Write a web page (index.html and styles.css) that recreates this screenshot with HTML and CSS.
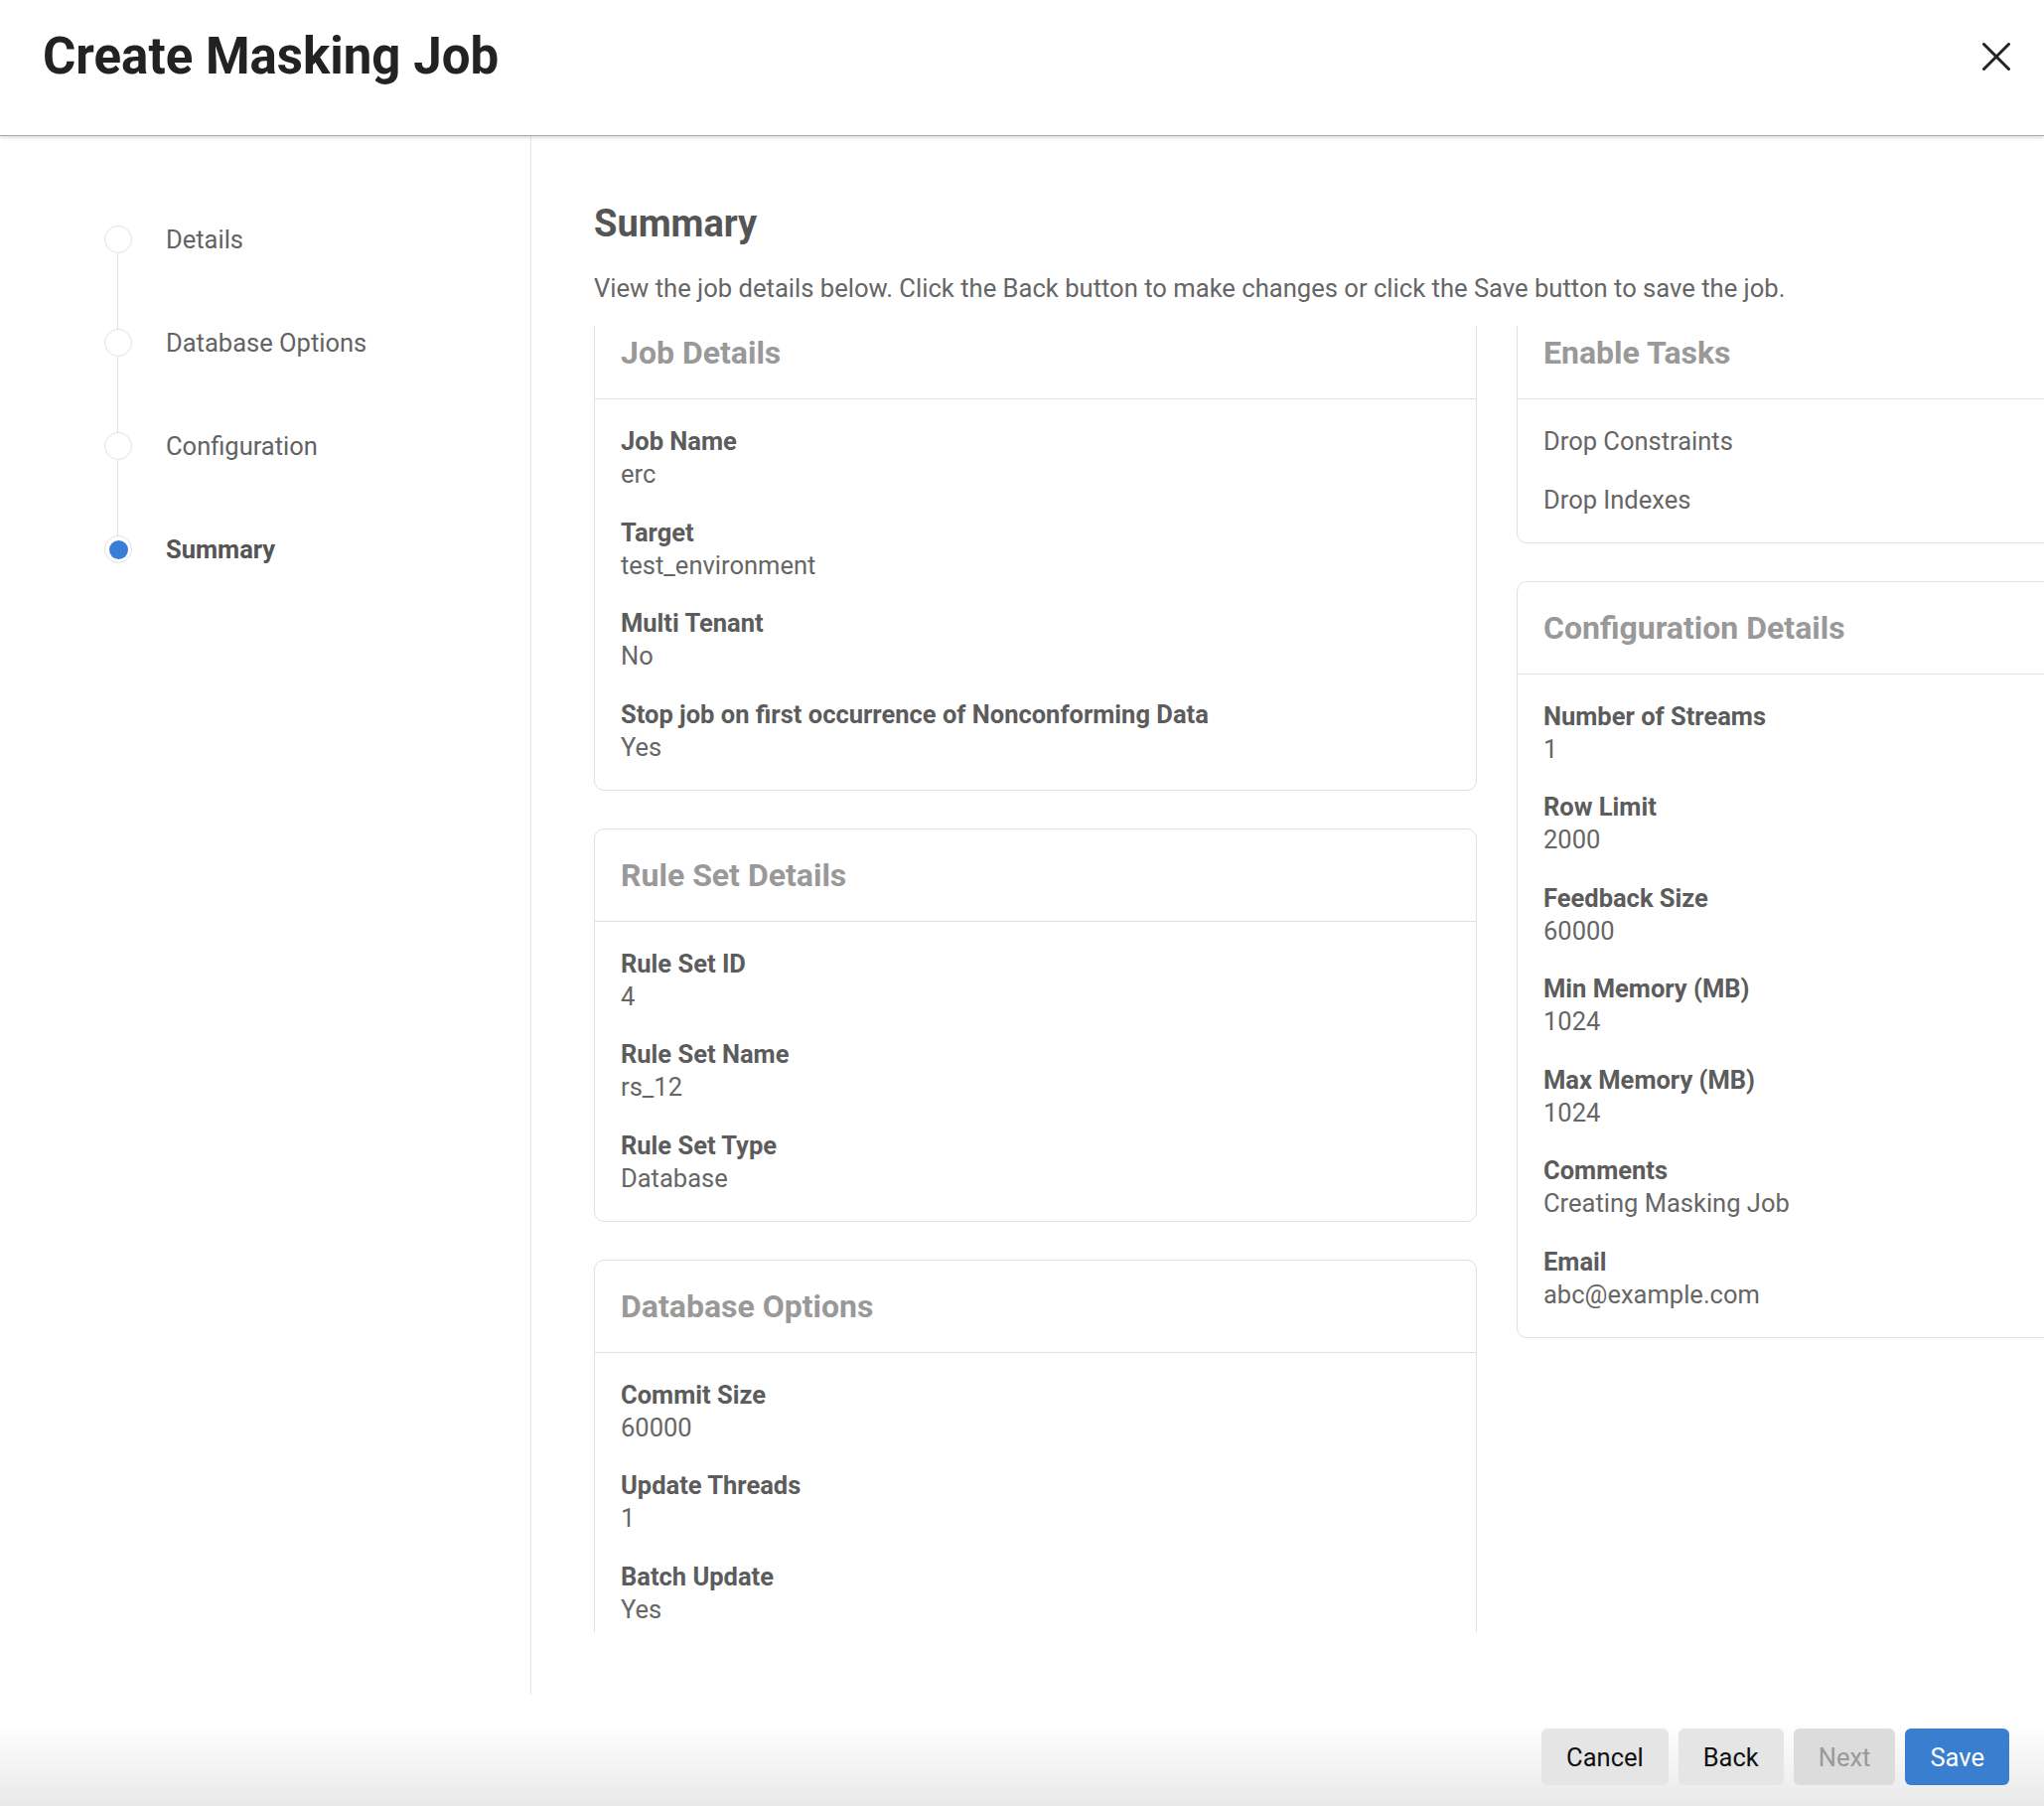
FILE: index.html
```html
<!DOCTYPE html>
<html lang="en">
<head>
  <meta charset="UTF-8">
  <title>Create Masking Job</title>
  <link rel="stylesheet" href="styles.css">
</head>
<body>
  <div class="dialog">
    <div class="dialog-header">
      <h1>Create Masking Job</h1>
      <button class="close-btn" aria-label="Close">
        <svg width="28" height="28" viewBox="0 0 28 28"><path d="M1.5 1.5 L26.5 26.5 M26.5 1.5 L1.5 26.5" stroke="#222" stroke-width="3" stroke-linecap="round" fill="none"/></svg>
      </button>
    </div>

    <div class="dialog-body">
      <!-- wizard steps -->
      <ul class="steps">
        <li class="step"><span class="dot"></span>Details</li>
        <li class="step"><span class="dot"></span>Database Options</li>
        <li class="step"><span class="dot"></span>Configuration</li>
        <li class="step active"><span class="dot"></span>Summary</li>
      </ul>

      <div class="content">
        <h2>Summary</h2>
        <p class="intro">View the job details below. Click the Back button to make changes or click the Save button to save the job.</p>

        <div class="scroll-area">
          <div class="columns">
            <div class="column">
              <div class="card">
                <div class="card-header">Job Details</div>
                <div class="card-body">
                  <div class="field"><div class="label">Job Name</div><div class="value">erc</div></div>
                  <div class="field"><div class="label">Target</div><div class="value">test_environment</div></div>
                  <div class="field"><div class="label">Multi Tenant</div><div class="value">No</div></div>
                  <div class="field"><div class="label">Stop job on first occurrence of Nonconforming Data</div><div class="value">Yes</div></div>
                </div>
              </div>

              <div class="card">
                <div class="card-header">Rule Set Details</div>
                <div class="card-body">
                  <div class="field"><div class="label">Rule Set ID</div><div class="value">4</div></div>
                  <div class="field"><div class="label">Rule Set Name</div><div class="value">rs_12</div></div>
                  <div class="field"><div class="label">Rule Set Type</div><div class="value">Database</div></div>
                </div>
              </div>

              <div class="card">
                <div class="card-header">Database Options</div>
                <div class="card-body">
                  <div class="field"><div class="label">Commit Size</div><div class="value">60000</div></div>
                  <div class="field"><div class="label">Update Threads</div><div class="value">1</div></div>
                  <div class="field"><div class="label">Batch Update</div><div class="value">Yes</div></div>
                </div>
              </div>
            </div>

            <div class="column">
              <div class="card">
                <div class="card-header">Enable Tasks</div>
                <div class="card-body">
                  <div class="field"><div class="value">Drop Constraints</div></div>
                  <div class="field"><div class="value">Drop Indexes</div></div>
                </div>
              </div>

              <div class="card">
                <div class="card-header">Configuration Details</div>
                <div class="card-body">
                  <div class="field"><div class="label">Number of Streams</div><div class="value">1</div></div>
                  <div class="field"><div class="label">Row Limit</div><div class="value">2000</div></div>
                  <div class="field"><div class="label">Feedback Size</div><div class="value">60000</div></div>
                  <div class="field"><div class="label">Min Memory (MB)</div><div class="value">1024</div></div>
                  <div class="field"><div class="label">Max Memory (MB)</div><div class="value">1024</div></div>
                  <div class="field"><div class="label">Comments</div><div class="value">Creating Masking Job</div></div>
                  <div class="field"><div class="label">Email</div><div class="value">abc@example.com</div></div>
                </div>
              </div>
            </div>
          </div>
        </div>
      </div>
    </div>

    <div class="dialog-footer">
      <button class="btn">Cancel</button>
      <button class="btn">Back</button>
      <button class="btn" disabled>Next</button>
      <button class="btn primary">Save</button>
    </div>
  </div>
</body>
</html>
```

FILE: styles.css
```css
/* Create Masking Job dialog */
body {
  margin: 0;
  font-family: Roboto, "Liberation Sans", sans-serif;
  background: #fff;
  overflow: hidden;
}

.dialog {
  display: flex;
  flex-direction: column;
  width: 2058px;
  height: 1818px;
}

.dialog-header {
  flex: none;
  height: 136px;
  display: flex;
  justify-content: space-between;
  align-items: flex-start;
  padding: 0 34px 0 43px;
  border-bottom: 1px solid #a9a9a9;
  box-shadow: 0 2px 3px rgba(0, 0, 0, 0.12);
  position: relative;
  z-index: 1;
}

.dialog-header h1 {
  margin: 0;
  padding-top: 26px;
  font-size: 51px;
  line-height: 62px;
  font-weight: 700;
  color: #222;
}

.close-btn {
  margin-top: 43px;
  padding: 0;
  border: none;
  background: none;
  width: 28px;
  height: 28px;
  cursor: pointer;
}

.dialog-body {
  flex: 1;
  display: flex;
  min-height: 0;
}

/* steps sidebar */
.steps {
  flex: none;
  width: 535px;
  margin: 0;
  padding: 52px 0 0 105px;
  list-style: none;
  border-right: 1px solid #e4e4e4;
  box-sizing: border-box;
}

.step {
  position: relative;
  height: 104px;
  display: flex;
  align-items: center;
  gap: 34px;
  font-size: 25.5px;
  color: #636363;
}

.step:not(:last-child)::after {
  content: "";
  position: absolute;
  left: 13px;
  top: 66px;
  width: 1px;
  height: 76px;
  background: #e2e2e2;
}

.dot {
  width: 26px;
  height: 26px;
  border: 1px solid #e2e2e2;
  border-radius: 50%;
  background: #fff;
  display: flex;
  align-items: center;
  justify-content: center;
}

.step.active {
  font-weight: 700;
  color: #555;
}

.step.active .dot::before {
  content: "";
  width: 19px;
  height: 19px;
  border-radius: 50%;
  background: #3a7dd6;
}

/* main content */
.content {
  flex: 1;
  min-width: 0;
  display: flex;
  flex-direction: column;
  padding: 65px 0 63px 63px;
}

.content h2 {
  margin: 0;
  font-size: 38px;
  line-height: 46px;
  font-weight: 700;
  color: #555;
}

.intro {
  margin: 25px 0 21px;
  font-size: 25.6px;
  line-height: 34px;
  color: #666;
}

.scroll-area {
  flex: 1;
  overflow: hidden;
}

.columns {
  display: grid;
  grid-template-columns: 889px 889px;
  gap: 40px;
  margin-top: -20px;
}

.column {
  display: flex;
  flex-direction: column;
  gap: 38px;
}

.card {
  border: 1px solid #e1e1e1;
  border-radius: 10px;
}

.card-header {
  height: 92px;
  display: flex;
  align-items: center;
  padding: 0 26px;
  border-bottom: 1px solid #e1e1e1;
  font-size: 32px;
  font-weight: 700;
  color: #999;
}

.card-body {
  padding: 26px;
}

.field {
  font-size: 25.5px;
  line-height: 33px;
}

.field + .field {
  margin-top: 25.5px;
}

.label {
  font-weight: 700;
  color: #5c5c5c;
}

.value {
  color: #666;
}

/* footer buttons */
.dialog-footer {
  flex: none;
  height: 112px;
  box-sizing: border-box;
  display: flex;
  justify-content: flex-end;
  align-items: flex-start;
  gap: 10px;
  padding: 34px 35px 0 0;
  background: linear-gradient(to bottom, #fff 25%, #e9e9e9 100%);
}

.btn {
  height: 57px;
  padding: 0 25px;
  border: none;
  border-radius: 6px;
  background: #e5e5e5;
  font-family: Roboto, "Liberation Sans", sans-serif;
  font-size: 25.5px;
  color: #111;
  cursor: pointer;
}

.btn:disabled {
  background: #dcdcdc;
  color: #999;
  cursor: default;
}

.btn.primary {
  background: #3a7ed0;
  color: #fff;
}
```
